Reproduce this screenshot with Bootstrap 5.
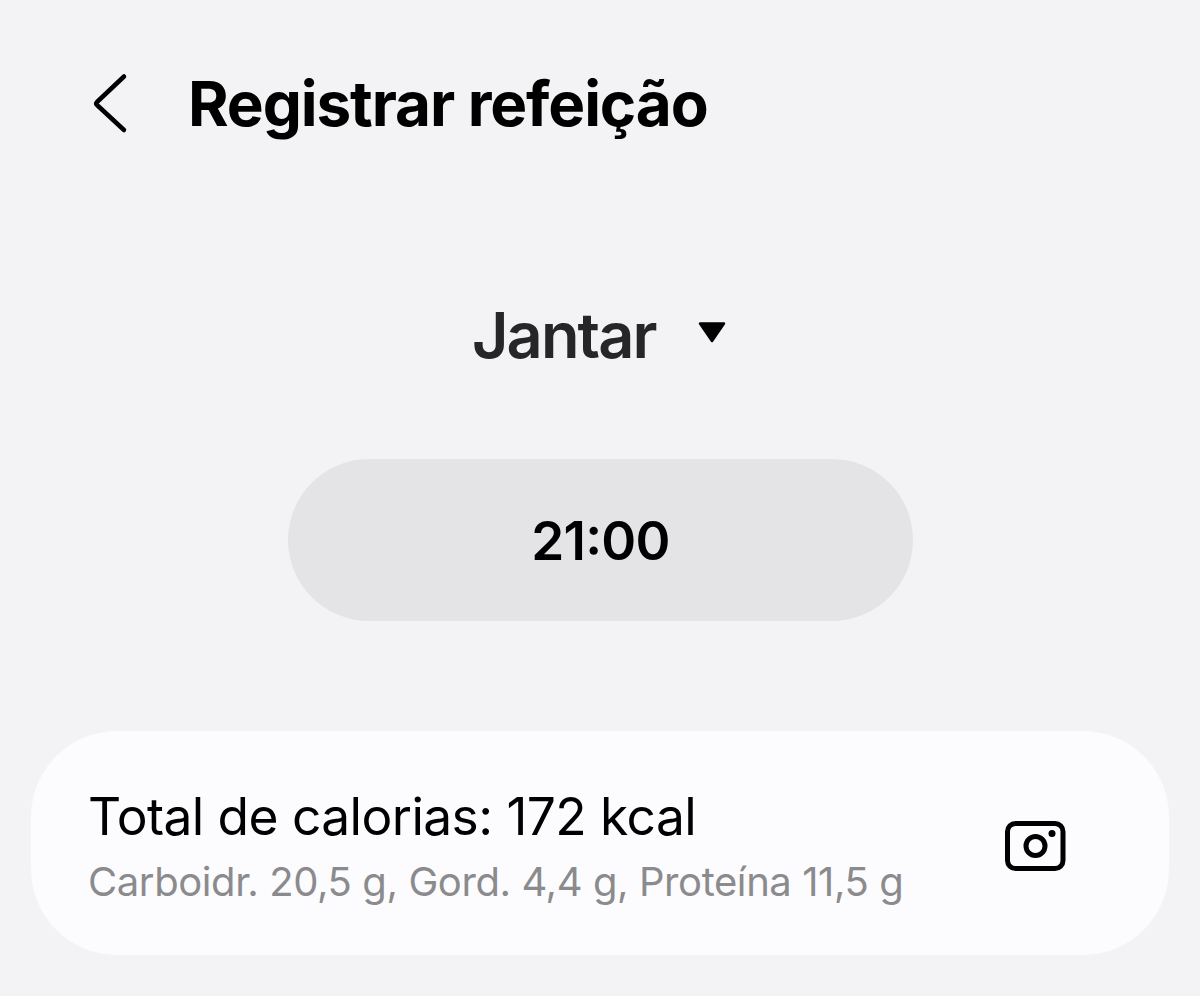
<!DOCTYPE html>
<html lang="pt-BR">
<head>
<meta charset="utf-8">
<meta name="viewport" content="width=device-width, initial-scale=1">
<title>Registrar refeição</title>
<link href="https://cdn.jsdelivr.net/npm/bootstrap@5.3.0/dist/css/bootstrap.min.css" rel="stylesheet">
<style>
body { background: #f3f3f5; color: #000; font-family: Inter, "Liberation Sans", sans-serif; min-height: 996px; }
.topbar { height: 208px; padding-left: 92px; }
.back { width: 36px; height: 62px; }
.title { font-size: 62px; font-weight: 700; line-height: 80px; letter-spacing: -1.1px; margin-left: 60px; }
.meal { height: 251px; padding-left: 472px; }
.meal-name { font-size: 63px; font-weight: 600; line-height: 80px; letter-spacing: -1.9px; color: #262628; padding-top: 2px; }
.caret { width: 28px; height: 21px; margin: -2px 0 0 42px; }
.time { width: 625px; height: 162px; margin-left: 288px; padding-top: 4px; background: #e4e4e6; font-size: 53px; font-weight: 600; letter-spacing: -.8px; font-feature-settings: "case"; }
.summary { margin: 110px 31px 0; height: 224px; border-radius: 86px; background: #fcfcfe; padding: 0 103px 0 57px; }
.total { font-size: 51.5px; line-height: 64px; letter-spacing: -.58px; }
.macros { font-size: 40px; line-height: 50px; letter-spacing: -.41px; color: #8b8b8d; }
.total-row { height: 69px; }
.summary-text { padding-top: 5px; }
.camera { width: 62px; height: 52px; margin-top: 6px; }
</style>
</head>
<body>
<header class="topbar d-flex align-items-center">
  <button class="btn p-0 border-0 d-flex" aria-label="Voltar">
    <svg class="back" viewBox="0 0 36 62" fill="none" stroke="#000" stroke-width="4.500" stroke-linecap="round" stroke-linejoin="round"><path d="M32 3.500 5 29Q3.500 30.500 5 32L32 57"/></svg>
  </button>
  <h1 class="title mb-0 text-nowrap">Registrar refeição</h1>
</header>
<main>
  <div class="meal d-flex align-items-center">
    <span class="meal-name text-nowrap">Jantar</span>
    <svg class="caret" viewBox="0 0 28 21"><path d="M2 1.500H26L14 19Z" stroke="#000" stroke-width="2.500" stroke-linejoin="round"/></svg>
  </div>
  <div class="time rounded-pill d-flex align-items-center justify-content-center"><span class="time-value">21:00</span></div>
  <section class="summary d-flex align-items-center justify-content-between">
    <div class="summary-text text-nowrap">
      <div class="total-row d-flex align-items-start"><span class="total">Total de calorias: 172 kcal</span></div>
      <div class="d-flex pt-1"><span class="macros">Carboidr. 20,5 g, Gord. 4,4 g, Proteína 11,5 g</span></div>
    </div>
    <svg class="camera" viewBox="0 0 62 52" fill="none" stroke="#000"><rect x="3.500" y="3.500" width="55.500" height="45" rx="8" stroke-width="5"/><circle cx="31.500" cy="26" r="9.500" stroke-width="5"/><circle cx="48" cy="13.500" r="3.500" fill="#000" stroke="none"/></svg>
  </section>
</main>
<script src="https://cdn.jsdelivr.net/npm/bootstrap@5.3.0/dist/js/bootstrap.bundle.min.js"></script>
</body>
</html>
